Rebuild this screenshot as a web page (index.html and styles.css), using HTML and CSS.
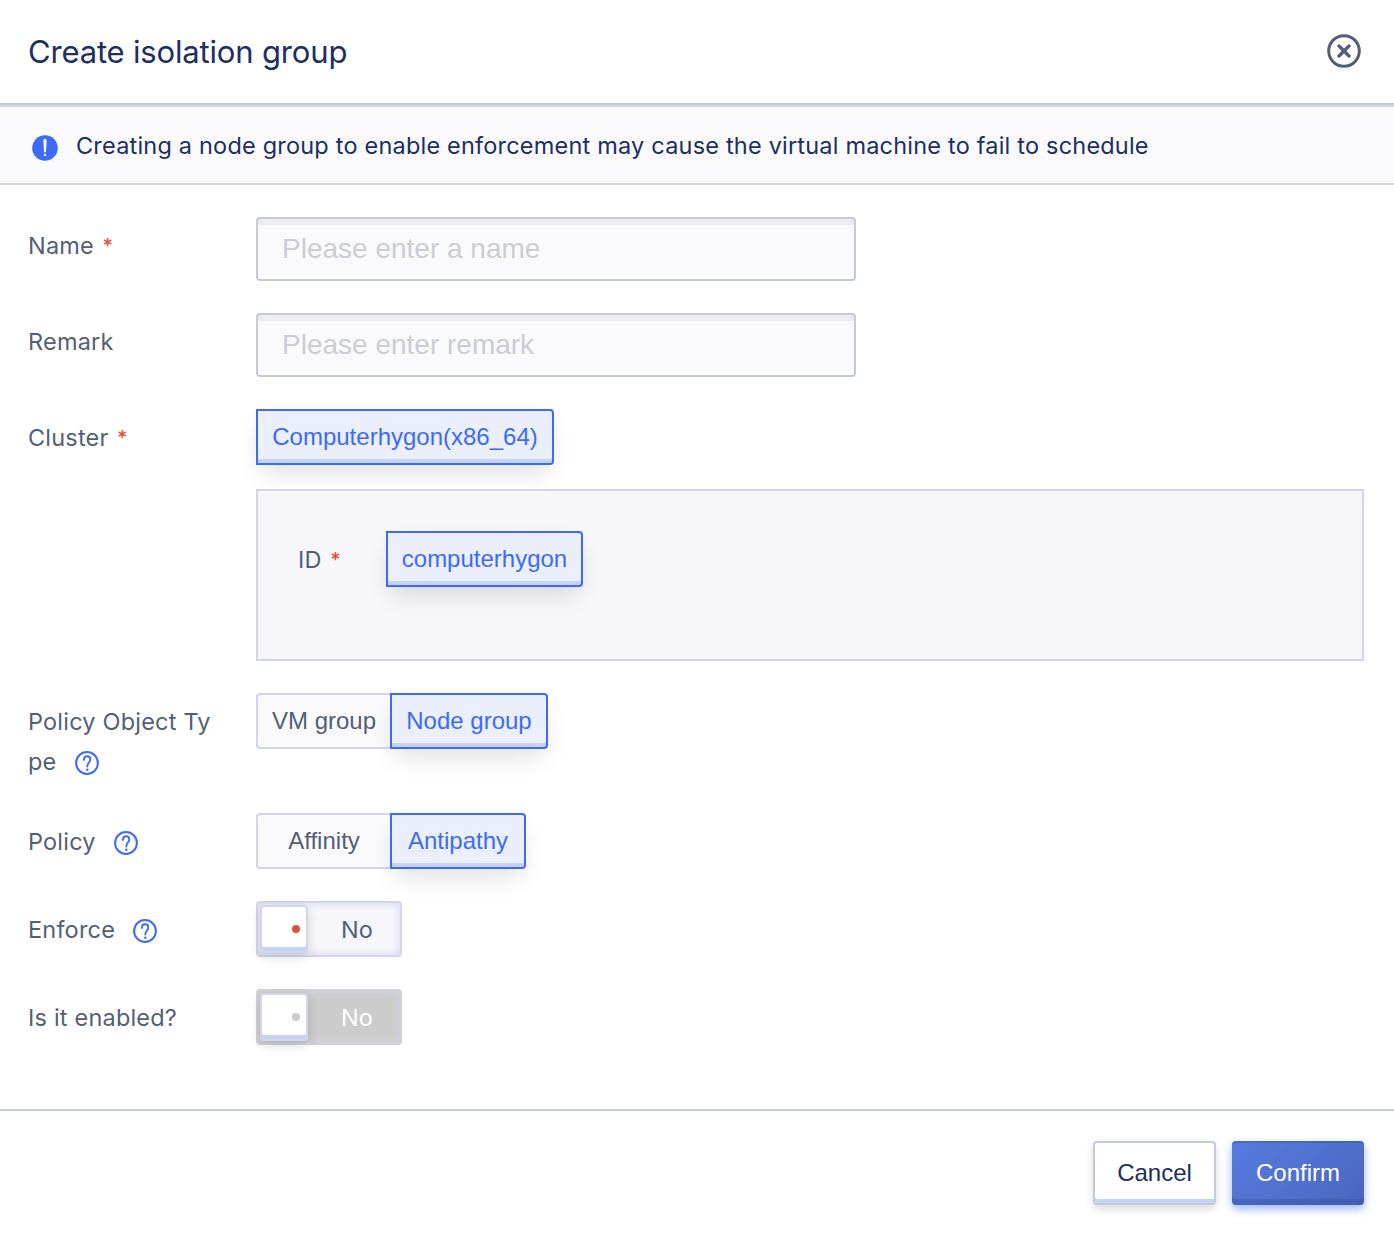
FILE: index.html
```html
<!DOCTYPE html>
<html lang="en">
<head>
<meta charset="utf-8">
<title>Create isolation group</title>
<link rel="stylesheet" href="styles.css">
</head>
<body>
<svg width="0" height="0" class="defs">
  <symbol id="help" viewBox="0 0 24 24">
    <circle cx="12" cy="12" r="10.9" fill="none" stroke="currentColor" stroke-width="2"/>
    <path d="M8.9 8.9C8.9 6.6 10.2 5.3 12.1 5.3S15.3 6.6 15.3 8.4C15.3 11.2 12.3 11.6 12.3 15.6" fill="none" stroke="currentColor" stroke-width="1.9" stroke-linecap="round"/>
    <circle cx="12.3" cy="18.7" r="1.2" fill="currentColor"/>
  </symbol>
</svg>
<main class="dialog">
  <header class="dialog-header">
    <h1 class="title">Create isolation group</h1>
    <button class="close" aria-label="Close">
      <svg width="34" height="34" viewBox="0 0 34 34" fill="none" stroke="currentColor" stroke-linecap="round">
        <circle cx="17" cy="17" r="15.3" stroke-width="3"/>
        <path d="M12 12L22 22M22 12L12 22" stroke-width="3.4"/>
      </svg>
    </button>
  </header>
  <div class="alert">
    <svg class="alert-icon" width="26" height="26" viewBox="0 0 26 26">
      <circle cx="13" cy="13" r="12.8" fill="#3d6bf8"/>
      <path d="M11.4 5.4a1.6 1.6 0 0 1 3.2 0L14 16.4a1 1 0 0 1-2 0z" fill="#fff"/>
      <circle cx="13" cy="19.9" r="1.2" fill="#fff"/>
    </svg>
    <span class="alert-text">Creating a node group to enable enforcement may cause the virtual machine to fail to schedule</span>
  </div>
  <form class="form">
    <div class="row">
      <div class="label">Name<span class="req">*</span></div>
      <input class="input" type="text" placeholder="Please enter a name">
    </div>
    <div class="row">
      <div class="label">Remark</div>
      <input class="input" type="text" placeholder="Please enter remark">
    </div>
    <div class="row">
      <div class="label">Cluster<span class="req">*</span></div>
      <div class="stack">
        <div class="radios"><button type="button" class="radio active single-cluster">Computerhygon(x86_64)</button></div>
        <div class="panel">
          <div class="label label-id">ID<span class="req">*</span></div>
          <button type="button" class="radio active single-id">computerhygon</button>
        </div>
      </div>
    </div>
    <div class="row">
      <div class="label label-type">Policy Object Type<svg class="help" width="24" height="24"><use href="#help"/></svg></div>
      <div class="radios"><button type="button" class="radio">VM group</button><button type="button" class="radio active node">Node group</button></div>
    </div>
    <div class="row">
      <div class="label">Policy<svg class="help" width="24" height="24"><use href="#help"/></svg></div>
      <div class="radios"><button type="button" class="radio">Affinity</button><button type="button" class="radio active anti">Antipathy</button></div>
    </div>
    <div class="row">
      <div class="label">Enforce<svg class="help" width="24" height="24"><use href="#help"/></svg></div>
      <div class="switch"><span class="knob"></span><span class="switch-text">No</span></div>
    </div>
    <div class="row">
      <div class="label enabled">Is it enabled?</div>
      <div class="switch disabled"><span class="knob"></span><span class="switch-text">No</span></div>
    </div>
  </form>
  <footer class="footer">
    <button class="btn">Cancel</button>
    <button class="btn primary">Confirm</button>
  </footer>
</main>
</body>
</html>
```
FILE: styles.css
```css
* { box-sizing: border-box; }
body { margin: 0; background: #fff; font-family: Inter, sans-serif; color: #545f76; }
button, input { font-family: "Liberation Sans", Arial, sans-serif; margin: 0; }
.defs { display: block; }
.dialog { display: flex; flex-direction: column; height: 1234px; }
.dialog-header { display: flex; align-items: center; justify-content: space-between; height: 105px; padding: 0 33px 0 28px; border-bottom: 2px solid #c4cad9; }
.title { margin: 0; font-size: 31px; line-height: 40px; font-weight: 400; color: #202e60; letter-spacing: -.17px; }
.close { display: flex; margin-bottom: 2px; padding: 0; border: 0; background: none; color: #545f76; }
.alert { display: flex; align-items: center; height: 80px; padding: 0 32px; border-top: 2px solid #d3d6ea; border-bottom: 2px solid #d3d6ea; background: #fafafd; }
.alert-icon { margin: 5px 18px 0 0; }
.alert-text { padding-top: 2px; font-size: 23.5px; line-height: 40px; letter-spacing: .2px; color: #202e60; white-space: nowrap; }
.form { display: flex; flex-direction: column; flex: 1; gap: 32px; padding: 32px 30px 0 28px; }
.row { display: flex; align-items: flex-start; }
.label { width: 228px; flex: none; padding: 9px 40px 0 0; margin-bottom: -1px; font-size: 23.5px; line-height: 40px; letter-spacing: .2px; }
.label-type { word-break: break-all; }
.enabled { padding-right: 0; }
.req { margin-left: 8.5px; color: #e0503d; font-size: 20px; font-weight: 500; line-height: 1; vertical-align: 1px; }
.help { margin-left: 18px; vertical-align: -5px; color: #3d6bf8; overflow: visible; }
.input { width: 600px; height: 64px; padding: 0 24px; border: 2px solid #c4cad9; border-radius: 4px; background: #fafafd; box-shadow: inset 0 6px 0 #ededf0; font-size: 28px; }
.input::placeholder { color: #cbccd5; opacity: 1; }
.stack { display: flex; flex: 1; flex-direction: column; gap: 24px; }
.radios { display: flex; }
.radio { width: 136px; height: 56px; padding: 0; border: 2px solid #d3d6ea; border-radius: 4px; background: #fafafd; color: #545f76; font-size: 24px; white-space: nowrap; }
.radio.active { border-color: #3d6bf8; border-radius: 0 4px 4px 0; background: #ebeffc; color: #3d6bf8; box-shadow: inset 0 -4px 0 #c5d3f7, 0 12px 24px -4px rgba(0, 0, 0, .12); }
.radio + .radio { margin-left: -2px; }
.single-cluster { width: 298px; }
.single-id { width: 197px; }
.node { width: 158px; }
.panel { position: relative; display: flex; align-items: flex-start; height: 172px; padding: 40px; border: 2px solid #d3d6ea; background: #f6f6fb; }
.label-id { width: 88px; padding-right: 0; }
.switch { display: flex; width: 146px; height: 56px; padding: 2px; border: 2px solid #d3d6ea; border-radius: 4px; background: #f6f6fb; box-shadow: inset 0 0 8px #d0d3e8; }
.knob { display: flex; align-items: center; justify-content: flex-end; width: 48px; height: 48px; padding: 0 6px 0 0; border: 2px solid #d3d6ea; border-radius: 4px; background: #fff; box-shadow: inset 0 -4px 0 #c5d3f7, 0 4px 12px rgba(0, 0, 0, .14); }
.knob::after { content: ""; width: 8px; height: 8px; border-radius: 50%; background: #e0503d; }
.switch-text { flex: 1; padding: 1px 0 0 8px; text-align: center; font-size: 23.5px; line-height: 48px; letter-spacing: .2px; }
.disabled { border-color: #d2d2d4; background: #ccc; color: #fff; }
.disabled .knob::after { background: #ccc; }
.footer { display: flex; justify-content: flex-end; gap: 16px; height: 125px; padding: 30px 30px 0; border-top: 2px solid #c4cad9; }
.btn { width: 123px; height: 64px; padding: 0; border: 2px solid #c4cad9; border-radius: 4px; background: #fff; color: #202e60; font-size: 24px; box-shadow: inset 0 -4px 0 #c5d3f7, 0 4px 8px rgba(0, 0, 0, .15); }
.primary { width: 132px; border: 0; background: linear-gradient(135deg, #577be0, #4867be); color: #fff; box-shadow: inset 0 2px 0 rgba(48, 72, 140, .3), inset 0 -6px 0 rgba(48, 72, 140, .3), 0 4px 8px rgba(61, 107, 248, .5); }
```
